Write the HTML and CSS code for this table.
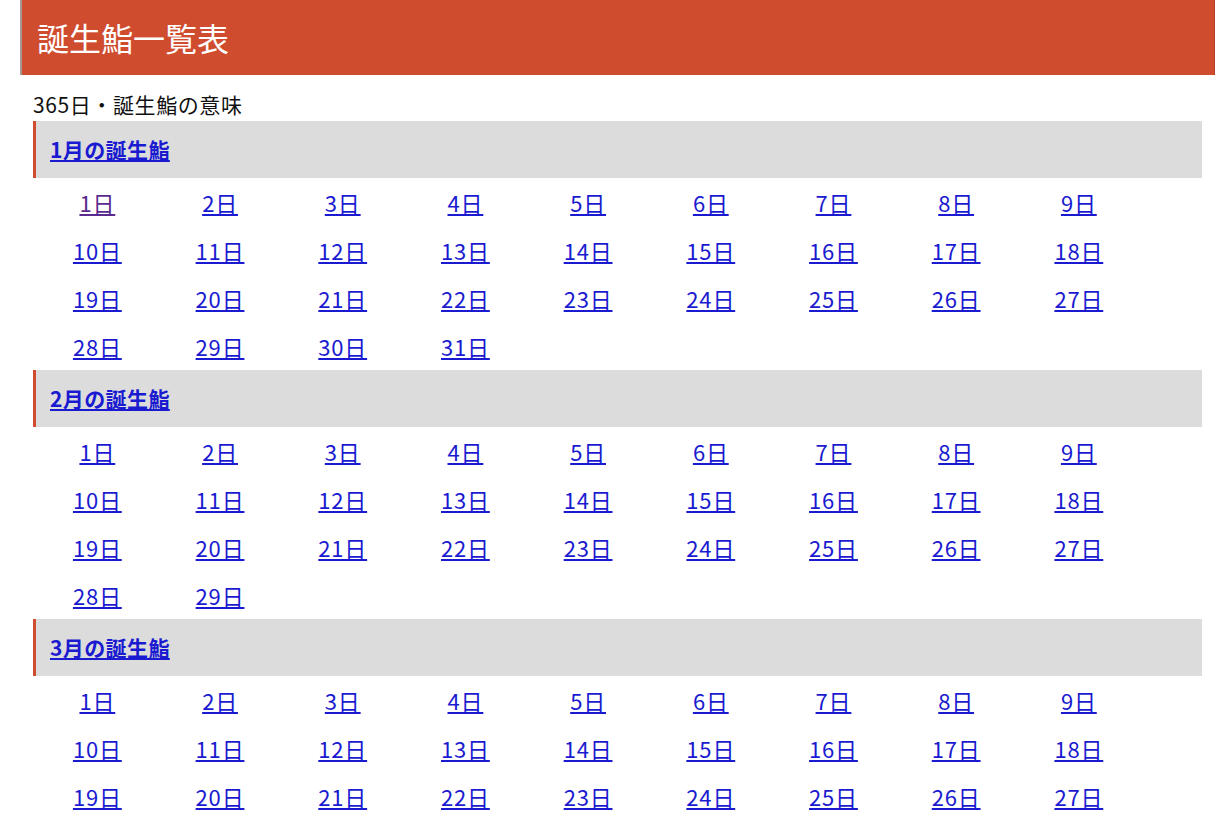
FILE: index.html
```html
<!DOCTYPE html>
<html lang="ja">
<head>
<meta charset="utf-8">
<title>誕生鮨一覧表</title>
<link rel="stylesheet" href="styles.css">
</head>
<body>
<header class="page-header"><h1 class="page-title">誕生鮨一覧表</h1></header>
<main class="content">
  <p class="intro">365日・誕生鮨の意味</p>

  <section class="month">
    <h2 class="month-title"><a href="#">1月の誕生鮨</a></h2>
    <ul class="days">
      <li><a class="visited" href="#">1日</a></li><li><a href="#">2日</a></li><li><a href="#">3日</a></li><li><a href="#">4日</a></li><li><a href="#">5日</a></li><li><a href="#">6日</a></li><li><a href="#">7日</a></li><li><a href="#">8日</a></li><li><a href="#">9日</a></li>
      <li><a href="#">10日</a></li><li><a href="#">11日</a></li><li><a href="#">12日</a></li><li><a href="#">13日</a></li><li><a href="#">14日</a></li><li><a href="#">15日</a></li><li><a href="#">16日</a></li><li><a href="#">17日</a></li><li><a href="#">18日</a></li>
      <li><a href="#">19日</a></li><li><a href="#">20日</a></li><li><a href="#">21日</a></li><li><a href="#">22日</a></li><li><a href="#">23日</a></li><li><a href="#">24日</a></li><li><a href="#">25日</a></li><li><a href="#">26日</a></li><li><a href="#">27日</a></li>
      <li><a href="#">28日</a></li><li><a href="#">29日</a></li><li><a href="#">30日</a></li><li><a href="#">31日</a></li>
    </ul>
  </section>

  <section class="month">
    <h2 class="month-title"><a href="#">2月の誕生鮨</a></h2>
    <ul class="days">
      <li><a href="#">1日</a></li><li><a href="#">2日</a></li><li><a href="#">3日</a></li><li><a href="#">4日</a></li><li><a href="#">5日</a></li><li><a href="#">6日</a></li><li><a href="#">7日</a></li><li><a href="#">8日</a></li><li><a href="#">9日</a></li>
      <li><a href="#">10日</a></li><li><a href="#">11日</a></li><li><a href="#">12日</a></li><li><a href="#">13日</a></li><li><a href="#">14日</a></li><li><a href="#">15日</a></li><li><a href="#">16日</a></li><li><a href="#">17日</a></li><li><a href="#">18日</a></li>
      <li><a href="#">19日</a></li><li><a href="#">20日</a></li><li><a href="#">21日</a></li><li><a href="#">22日</a></li><li><a href="#">23日</a></li><li><a href="#">24日</a></li><li><a href="#">25日</a></li><li><a href="#">26日</a></li><li><a href="#">27日</a></li>
      <li><a href="#">28日</a></li><li><a href="#">29日</a></li>
    </ul>
  </section>

  <section class="month">
    <h2 class="month-title"><a href="#">3月の誕生鮨</a></h2>
    <ul class="days">
      <li><a href="#">1日</a></li><li><a href="#">2日</a></li><li><a href="#">3日</a></li><li><a href="#">4日</a></li><li><a href="#">5日</a></li><li><a href="#">6日</a></li><li><a href="#">7日</a></li><li><a href="#">8日</a></li><li><a href="#">9日</a></li>
      <li><a href="#">10日</a></li><li><a href="#">11日</a></li><li><a href="#">12日</a></li><li><a href="#">13日</a></li><li><a href="#">14日</a></li><li><a href="#">15日</a></li><li><a href="#">16日</a></li><li><a href="#">17日</a></li><li><a href="#">18日</a></li>
      <li><a href="#">19日</a></li><li><a href="#">20日</a></li><li><a href="#">21日</a></li><li><a href="#">22日</a></li><li><a href="#">23日</a></li><li><a href="#">24日</a></li><li><a href="#">25日</a></li><li><a href="#">26日</a></li><li><a href="#">27日</a></li>
      <li><a href="#">28日</a></li><li><a href="#">29日</a></li><li><a href="#">30日</a></li><li><a href="#">31日</a></li>
    </ul>
  </section>
</main>
</body>
</html>
```
FILE: styles.css
```css
html, body {
  margin: 0;
  padding: 0;
  background: #ffffff;
}
body {
  font-family: "Noto Sans CJK JP", "Noto Sans", sans-serif;
  color: #111;
}
.page-header {
  margin: 0 15px 0 20px;
  height: 75px;
  background: #d04c2f;
  border-left: 2px solid #a89893;
  border-right: 1px solid #b8402a;
  display: flex;
  align-items: center;
  box-sizing: border-box;
}
.page-title {
  margin: -2px 0 0 15px;
  font-size: 32px;
  font-weight: normal;
  color: #fff;
  line-height: 1;
}
.content {
  margin: 0 28px 0 33px;
}
.intro {
  margin: 16px 0 4px;
  font-size: 21px;
  letter-spacing: 0.6px;
  line-height: 26px;
}
.month-title {
  margin: 0;
  height: 57px;
  background: #dcdcdc;
  border-left: 3px solid #d04c2f;
  padding-left: 14px;
  font-size: 21px;
  letter-spacing: 0.4px;
  font-weight: bold;
  line-height: 57px;
}
a {
  color: #1a1ad0;
}
a.visited {
  color: #5a2a8f;
}
.days {
  list-style: none;
  margin: 0;
  padding: 0 0 0 3px;
  display: grid;
  grid-template-columns: repeat(9, 122.7px);
  grid-auto-rows: 48px;
}
.days li {
  text-align: center;
  font-size: 22px;
  letter-spacing: 0.8px;
  line-height: 48px;
}
```
